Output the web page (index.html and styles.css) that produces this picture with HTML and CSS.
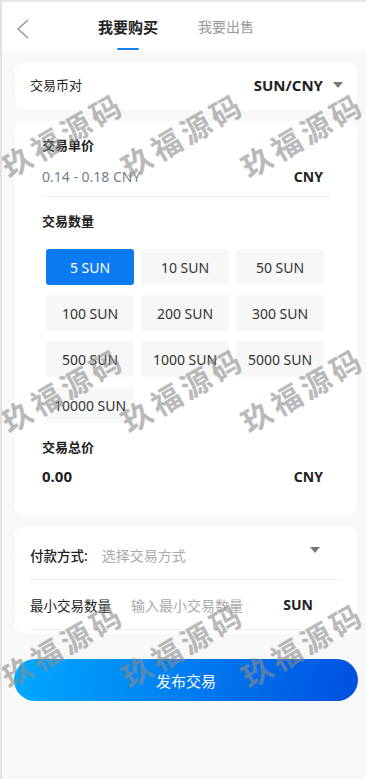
FILE: index.html
```html
<!DOCTYPE html>
<html lang="zh-CN">
<head>
  <meta charset="UTF-8" />
  <meta name="viewport" content="width=device-width, initial-scale=1.0"/>
  <title>发布交易</title>
  <link rel="stylesheet" href="styles.css">
</head>
<body>
  <div class="page">
    <div class="header">
      <svg class="back" width="14" height="20" viewBox="0 0 14 20">
        <polyline points="12,1 2,10 12,19" fill="none" stroke="#9a9a9a" stroke-width="1.6"/>
      </svg>
      <div class="tabs">
        <div class="tab active">我要购买</div>
        <div class="tab">我要出售</div>
      </div>
    </div>

    <div class="card pair">
      <span class="label">交易币对</span>
      <span class="pair-value">SUN/CNY <i class="caret"></i></span>
    </div>

    <div class="card form">
      <div class="title">交易单价</div>
      <div class="row price">
        <span class="hint">0.14 - 0.18 CNY</span>
        <span class="unit">CNY</span>
      </div>

      <div class="title">交易数量</div>
      <div class="amounts">
        <button class="amount selected">5 SUN</button>
        <button class="amount">10 SUN</button>
        <button class="amount">50 SUN</button>
        <button class="amount">100 SUN</button>
        <button class="amount">200 SUN</button>
        <button class="amount">300 SUN</button>
        <button class="amount">500 SUN</button>
        <button class="amount">1000 SUN</button>
        <button class="amount">5000 SUN</button>
        <button class="amount">10000 SUN</button>
      </div>

      <div class="title total-title">交易总价</div>
      <div class="row total">
        <span class="sum">0.00</span>
        <span class="unit">CNY</span>
      </div>
    </div>

    <div class="card options">
      <div class="opt">
        <span class="opt-label strong">付款方式:</span>
        <span class="placeholder">选择交易方式</span>
        <i class="caret pay-caret"></i>
      </div>
      <div class="opt">
        <span class="opt-label">最小交易数量</span>
        <span class="placeholder grow">输入最小交易数量</span>
        <span class="unit">SUN</span>
      </div>
    </div>

    <button class="submit">发布交易</button>

    <div class="watermark">
      <div class="wm-row">
        <span>玖福源码</span><span>玖福源码</span><span>玖福源码</span>
      </div>
      <div class="wm-row">
        <span>玖福源码</span><span>玖福源码</span><span>玖福源码</span>
      </div>
      <div class="wm-row">
        <span>玖福源码</span><span>玖福源码</span><span>玖福源码</span>
      </div>
    </div>
  </div>
</body>
</html>
```

FILE: styles.css
```css
body {
  margin: 0;
  font-family: "Noto Sans", "Noto Sans CJK SC", sans-serif;
  background: #f8f8f8;
  color: #222;
}

.page {
  position: relative;
  min-height: 777px;
  border-top: 2px solid #e6e6e6;
  border-left: 2px solid #e2e2e2;
  overflow: hidden;
}

.header {
  height: 49px;
  background: #fff;
  display: flex;
  align-items: center;
  position: relative;
}

.back {
  position: absolute;
  left: 14px;
  top: 17px;
}

.tabs {
  display: flex;
  margin-left: 96px;
  gap: 40px;
  align-items: center;
}

.tab {
  font-size: 14px;
  color: #999;
  position: relative;
  line-height: 20px;
}

.tab.active {
  font-size: 15px;
  font-weight: bold;
  color: #222;
}

.tab.active::after {
  content: "";
  position: absolute;
  left: 19px;
  width: 22px;
  bottom: -13px;
  height: 2px;
  background: #1a7ff0;
  border-radius: 1px;
}

.card {
  background: #fff;
  border-radius: 9px;
  margin: 0 9px 0 13px;
}

.pair {
  margin-top: 11px;
  height: 48px;
  display: flex;
  align-items: center;
  justify-content: space-between;
  padding: 0 14px 0 15px;
}

.label {
  font-size: 13px;
  margin-top: -3px;
}

.pair-value {
  font-size: 15px;
  font-weight: bold;
  display: flex;
  align-items: center;
  gap: 10px;
  margin-top: -3px;
}

.caret {
  display: inline-block;
  width: 0;
  height: 0;
  border-left: 5px solid transparent;
  border-right: 5px solid transparent;
  border-top: 6px solid #777;
}

.form {
  margin-top: 11px;
  padding: 14px 34px 18px 27px;
  height: 362px;
}

.title {
  font-size: 13px;
  font-weight: bold;
  line-height: 20px;
}

.row {
  display: flex;
  justify-content: space-between;
  align-items: center;
}

.price {
  height: 40px;
  margin-top: 1px;
  border-bottom: 1px solid #eee;
  margin-right: -7px;
  padding-right: 7px;
  margin-bottom: 14px;
}

.hint {
  font-size: 14px;
  color: #72808e;
}

.unit {
  font-size: 14px;
  font-weight: bold;
}

.amounts {
  display: grid;
  grid-template-columns: repeat(3, 88px);
  column-gap: 7px;
  row-gap: 10px;
  margin: 18px 0 0 4px;
}

.amount {
  height: 36px;
  border: none;
  border-radius: 3px;
  background: #f7f7f7;
  color: #333;
  font-family: inherit;
  font-size: 14px;
  padding: 0;
}

.amount.selected {
  background: #0c7af0;
  color: #fff;
}

.total-title {
  margin-top: 14px;
}

.total {
  margin-top: 9px;
}

.sum {
  font-size: 15px;
  font-weight: bold;
}

.options {
  margin-top: 11px;
  padding: 4px 15px 4px 15px;
}

.opt {
  display: flex;
  align-items: center;
  height: 49px;
  border-bottom: 1px solid #eee;
}

.opt-label {
  font-size: 13.5px;
  color: #222;
}

.opt-label.strong {
  font-weight: 500;
  margin-right: 14px;
}

.opt:last-child .opt-label {
  margin-right: 20px;
}

.placeholder {
  font-size: 14px;
  color: #aaa;
  flex: 1;
}

.pay-caret {
  margin-right: 22px;
  margin-top: -10px;
}

.opt .unit {
  margin-right: 29px;
}

.submit {
  display: block;
  margin: 25px 8px 0 12px;
  width: calc(100% - 20px);
  height: 42px;
  border: none;
  border-radius: 21px;
  background: linear-gradient(100deg, #00aaff, #0050e0);
  color: #fff;
  font-family: inherit;
  font-size: 15px;
}

/* watermark overlay */
.watermark {
  position: absolute;
  top: 4px;
  left: 0;
  z-index: 5;
  pointer-events: none;
}

.wm-row {
  display: flex;
  height: 255px;
  align-items: center;
}

.wm-row span {
  display: flex;
  justify-content: center;
  width: 120px;
  font-size: 30px;
  font-weight: bold;
  color: rgba(140, 140, 140, 0.6);
  transform: rotate(-30deg);
  white-space: nowrap;
  letter-spacing: 4px;
}
```
